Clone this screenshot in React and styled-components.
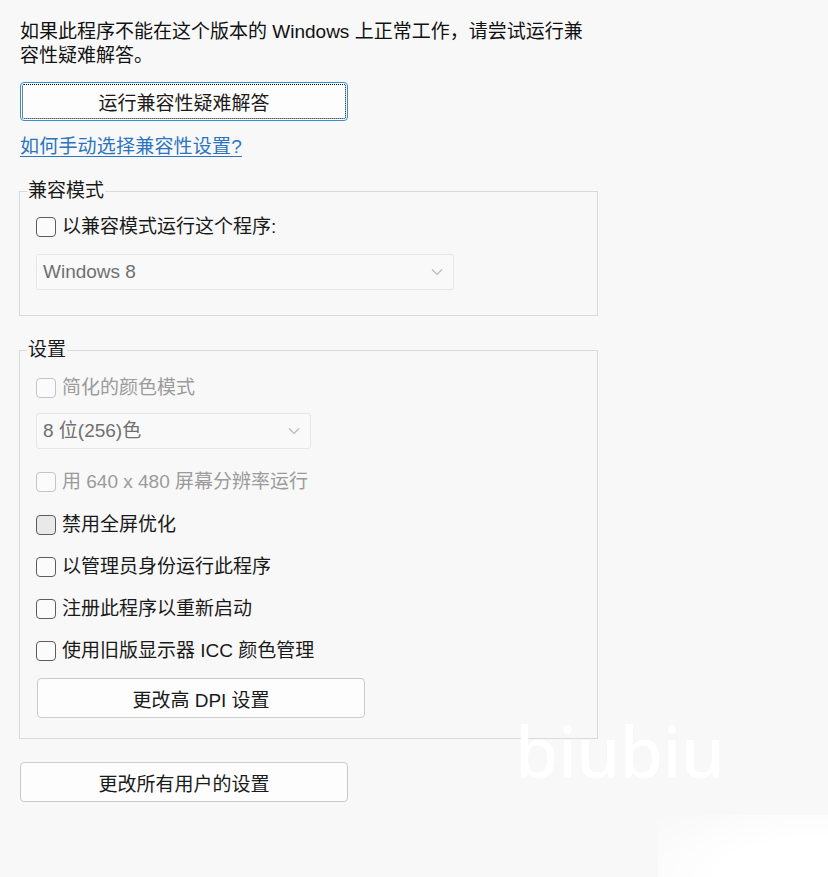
import React from "react";
import styled, { createGlobalStyle } from "styled-components";

const Global = createGlobalStyle`
  html, body { margin: 0; padding: 0; background: #f8f8f8; }
  body {
    font-family: "Liberation Sans", "Noto Sans CJK SC", sans-serif;
    color: #1a1a1a;
  }
`;

const Page = styled.div`
  position: relative;
  min-height: 877px;
  padding: 20px 0 0 20px;
  box-sizing: border-box;
  overflow: hidden;
  font-size: 19px;
  line-height: 24px;
`;

const Intro = styled.p`
  margin: 0;
  width: 580px;
  color: #111;
`;

const Button = styled.button`
  display: flex;
  align-items: center;
  justify-content: center;
  box-sizing: border-box;
  width: ${(p) => p.$width || 328}px;
  height: ${(p) => p.$height || 40}px;
  margin: ${(p) => p.$margin || "0"};
  padding: 0;
  background: #fdfdfd;
  border: 1px solid ${(p) => (p.$focused ? "#2f93d6" : "#cacaca")};
  border-radius: 4px;
  font-family: inherit;
  font-size: 19px;
  color: #1a1a1a;
  outline: ${(p) => (p.$focused ? "1px dotted #000" : "none")};
  outline-offset: -3px;
  cursor: default;
`;

const Link = styled.a`
  display: block;
  margin-top: 14px;
  width: max-content;
  color: #2b74c0;
  letter-spacing: 0.2px;
  text-decoration: underline;
  text-underline-offset: 3px;
  cursor: pointer;
`;

const Group = styled.fieldset`
  box-sizing: border-box;
  width: 579px;
  margin: ${(p) => p.$top}px 0 0 -1px;
  padding: 0 16px ${(p) => p.$bottom}px 16px;
  border: 1px solid #dadada;
  border-radius: 0;
  display: flex;
  flex-direction: column;
  align-items: flex-start;
`;

const Legend = styled.legend`
  margin-left: -9px;
  padding: 0 1px;
  line-height: 24px;
  color: #1a1a1a;
`;

const Row = styled.label`
  display: flex;
  align-items: center;
  gap: 6px;
  height: 24px;
  margin-top: ${(p) => p.$top}px;
  color: ${(p) => (p.$disabled ? "#9b9b9b" : "#1a1a1a")};
`;

const Box = styled.span`
  box-sizing: border-box;
  width: 20px;
  height: 20px;
  border-radius: 4px;
  border: 1px solid ${(p) => (p.$disabled ? "#c4c4c4" : "#5c5c5c")};
  background: ${(p) => (p.$hover ? "#e9e9e9" : "#fbfbfb")};
  flex-shrink: 0;
`;

const Select = styled.div`
  box-sizing: border-box;
  display: flex;
  align-items: center;
  justify-content: space-between;
  width: ${(p) => p.$width}px;
  height: 36px;
  margin-top: ${(p) => p.$top}px;
  padding: 0 10px 0 6px;
  border: 1px solid #e6e6e6;
  border-radius: 3px;
  background: #f9f9f9;
  color: #707070;
`;

const Chevron = () => (
  <svg width="12" height="8" viewBox="0 0 12 8">
    <polyline points="1,1.5 6,6.5 11,1.5" fill="none" stroke="#b8b8b8" strokeWidth="1.2" />
  </svg>
);

const Watermark = styled.div`
  position: absolute;
  left: 515px;
  top: 701px;
  font-family: "Noto Sans", sans-serif;
  font-size: 70px;
  line-height: 100px;
  font-weight: 500;
  letter-spacing: -0.5px;
  color: #ffffff;
  text-shadow: 0 0 2px rgba(0, 0, 0, 0.025);
  pointer-events: none;
`;

const Glare = styled.div`
  position: absolute;
  right: 0;
  bottom: 0;
  width: 170px;
  height: 62px;
  background: radial-gradient(ellipse at 100% 100%, #ffffff 45%, rgba(255,255,255,0) 100%);
  pointer-events: none;
`;

function Check({ label, top, disabled, hover }) {
  return (
    <Row $top={top} $disabled={disabled}>
      <Box $disabled={disabled} $hover={hover} />
      <span>{label}</span>
    </Row>
  );
}

export default function App() {
  return (
    <>
      <Global />
      <Page>
        <Intro>如果此程序不能在这个版本的 Windows 上正常工作，请尝试运行兼容性疑难解答。</Intro>
        <Button $focused $margin="14px 0 0 0" $height={39}>运行兼容性疑难解答</Button>
        <Link>如何手动选择兼容性设置?</Link>

        <Group $top={20} $bottom={25}>
          <Legend>兼容模式</Legend>
          <Check label="以兼容模式运行这个程序:" top={12} />
          <Select $width={418} $top={15}>
            <span>Windows 8</span>
            <Chevron />
          </Select>
        </Group>

        <Group $top={22} $bottom={20}>
          <Legend>设置</Legend>
          <Check label="简化的颜色模式" top={14} disabled />
          <Select $width={275} $top={13}>
            <span>8 位(256)色</span>
            <Chevron />
          </Select>
          <Check label="用 640 x 480 屏幕分辨率运行" top={21} disabled />
          <Check label="禁用全屏优化" top={19} hover />
          <Check label="以管理员身份运行此程序" top={18} />
          <Check label="注册此程序以重新启动" top={18} />
          <Check label="使用旧版显示器 ICC 颜色管理" top={18} />
          <Button $margin="15px 0 0 1px">更改高 DPI 设置</Button>
        </Group>

        <Button $margin="23px 0 0 0">更改所有用户的设置</Button>

        <Watermark>biubiu</Watermark>
        <Glare />
      </Page>
    </>
  );
}
